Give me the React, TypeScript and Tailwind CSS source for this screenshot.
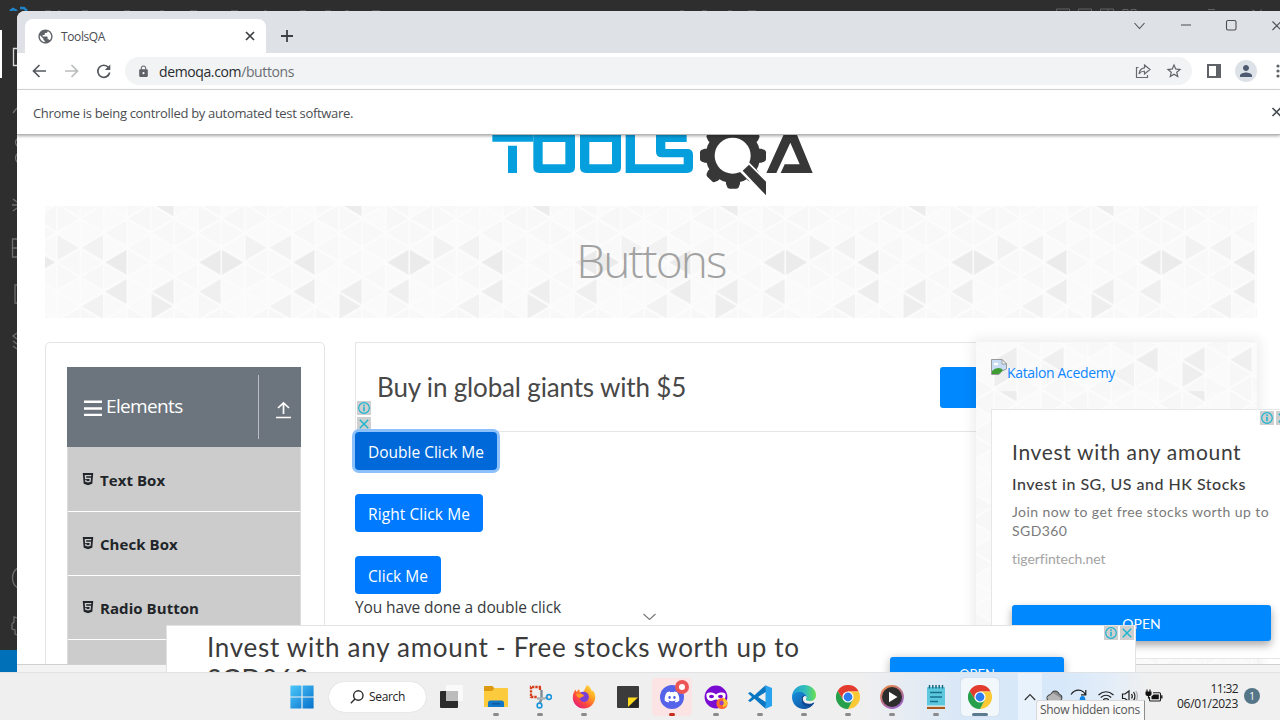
import React from "react";
import { FaDiscord, FaHtml5 } from "react-icons/fa";
import { MdPublic, MdLock, MdStarBorder, MdPerson } from "react-icons/md";

type TriSpec = { col: number; y: number; dir: "l" | "r"; fill: string };

const COL = 23.5;
const ROW = 29.3;

function noise(a: number, b: number) {
  const v = Math.sin(a * 12.9898 + b * 78.233) * 43758.5453;
  return v - Math.floor(v);
}

const darkTriangles: TriSpec[] = [
  { col: 2, y: 56.3, dir: "l", fill: "#ebebeb" },
  { col: 2, y: 85.7, dir: "l", fill: "#ededed" },
  { col: 6, y: 56.3, dir: "l", fill: "#ebebeb" },
  { col: 6, y: 85.7, dir: "l", fill: "#efefef" },
  { col: 4, y: 85.7, dir: "l", fill: "#eeeeee" },
  { col: 4, y: 100.3, dir: "r", fill: "#eeeeee" },
  { col: 1, y: 100.3, dir: "l", fill: "#f2f2f2" },
  { col: 0, y: 41.7, dir: "r", fill: "#f2f2f2" },
  { col: 1, y: 41.7, dir: "l", fill: "#f2f2f2" },
  { col: 4, y: -2.3, dir: "l", fill: "#ececec" },
];

function trianglePath(col: number, y: number, dir: "l" | "r") {
  const x0 = 11.8 + col * COL;
  const a = dir === "l" ? x0 + 1.6 : x0 + COL - 1.6;
  const b = dir === "l" ? x0 + COL - 0.8 : x0 + 0.8;
  return `M${a} ${y}L${b} ${y - 12.4}V${y + 12.4}Z`;
}

function TrianglePattern({ id, dx, dy }: { id: string; dx: number; dy: number }) {
  const cells: React.ReactNode[] = [];
  for (let c = -1; c < 8; c++) {
    for (let r = -1; r < 6; r++) {
      const odd = ((c % 2) + 2) % 2;
      const yl = (odd ? 12.3 : 27) + r * ROW;
      const yr = (odd ? 27 : 12.3) + r * ROW;
      const k = ((c % 8) + 8) % 8;
      const g1 = Math.round(247 + noise(k + 1, r + 4) * 3.4);
      const g2 = Math.round(247 + noise(k + 11, r + 9) * 3.4);
      cells.push(<path key={`l${c}_${r}`} d={trianglePath(c, yl, "l")} fill={`rgb(${g1},${g1},${g1})`} />);
      cells.push(<path key={`r${c}_${r}`} d={trianglePath(c, yr, "r")} fill={`rgb(${g2},${g2},${g2})`} />);
    }
  }
  return (
    <svg className="absolute inset-0 h-full w-full">
      <defs>
        <pattern id={id} width="188" height="117.2" patternUnits="userSpaceOnUse" patternTransform={`translate(${dx} ${dy})`}>
          <rect width="188" height="118" fill="#fcfcfc" />
          {cells}
          {darkTriangles.map((t, i) => (
            <path key={i} d={trianglePath(t.col, t.y, t.dir)} fill={t.fill} />
          ))}
          <path d={trianglePath(-1, 56.3, "r")} fill="#ebebeb" />
          <path d={trianglePath(7, 56.3, "r")} fill="#ebebeb" />
        </pattern>
      </defs>
      <rect width="100%" height="100%" fill={`url(#${id})`} />
    </svg>
  );
}

function ToolsQaLogo() {
  return (
    <svg className="block h-[62px] w-[327px]" viewBox="90 15 981 186">
      <g fill="#069fde" fillRule="evenodd">
        <path d="M97 15H220V35H97ZM144 47H171V129H144Z" />
        <path d="M220 0H345V112Q345 129 327 129H238Q220 129 220 112ZM248 36V103H316V36Z" />
        <path d="M360 0H483V112Q483 129 465 129H378Q360 129 360 112ZM388 36V103H456V36Z" />
        <path d="M497 0H525V103H671V82H606Q588 82 588 65V0H680V36H616V57H682Q699 57 699 74V112Q699 129 681 129H497Z" />
      </g>
      <g fill="#373737">
        <circle cx="819" cy="77" r="82" />
        {[0, 45, 90, 135, 180, 225, 270, 315].map((a) => (
          <path key={a} d="M798 -8L802 -18Q804 -22 809 -22H829Q834 -22 836 -18L840 -8V20H798Z" transform={`rotate(${a} 819 77)`} />
        ))}
      </g>
      <circle cx="818" cy="77" r="54" fill="#fff" />
      <path d="M838 124L866 96L940 170V215H930Z" fill="#fff" />
      <path d="M848 122L867 104L918 155V196Z" fill="#373737" />
      <path d="M919 129L975 5H1007L1058 129H962L974 103H1019L991 38L949 129Z" fill="#373737" />
    </svg>
  );
}

function ChromeIcon() {
  return (
    <svg className="h-6 w-6" viewBox="0 0 24 24">
      <path d="M12 6.5H22.7A12 12 0 0 0 1.6 6L7.2 15Z" fill="#e33b2e" />
      <path d="M16.8 14.7L11.8 24A12 12 0 0 0 22.7 6.5H12Z" fill="#fcc934" />
      <path d="M7.2 14.7L1.6 6A12 12 0 0 0 12 24L16.8 14.7Z" fill="#27a04b" />
      <circle cx="12" cy="12" r="5.6" fill="#fff" />
      <circle cx="12" cy="12" r="4.4" fill="#2d7df0" />
    </svg>
  );
}

function WindowsIcon() {
  return (
    <svg className="ml-px h-6 w-6" viewBox="0 0 24 24">
      <defs>
        <linearGradient id="win" x1="0" y1="0" x2="1" y2="1">
          <stop offset="0" stopColor="#4cc8fa" />
          <stop offset="1" stopColor="#0670cc" />
        </linearGradient>
      </defs>
      <path d="M1 .5H11.4V11.4H.4V1ZM12.6 .4H23.6V11.4H12.6ZM.4 12.6H11.4V23.6H.4ZM12.6 12.6H23.6V23.6H12.6Z" fill="url(#win)" />
    </svg>
  );
}

function TaskViewIcon() {
  return (
    <svg className="ml-[3px] h-6 w-6" viewBox="0 0 24 24">
      <rect x="7" y="0" width="17" height="16" rx="1" fill="#fafafa" />
      <rect x="1" y="6" width="18" height="17" rx="1" fill="#2c2c2c" />
      <rect x="7" y="6" width="12" height="10" fill="#bcbcbc" />
    </svg>
  );
}

function ExplorerIcon() {
  return (
    <svg className="h-6 w-6" viewBox="0 0 24 24">
      <path d="M0 2Q0 1 1 1H8.500L10.500 3.500V7H0Z" fill="#dc9a10" />
      <path d="M0 6H8L11 3H23Q24 3 24 4V21Q24 22 23 22H1Q0 22 0 21Z" fill="#fbcb3d" />
      <path d="M4 22V18Q4 15.500 6.500 15.500H17.500Q20 15.500 20 18V22Z" fill="#1476c6" />
      <path d="M8 18.800H16" stroke="#0a4f91" strokeWidth="1.200" />
    </svg>
  );
}

function SnippingIcon() {
  return (
    <svg className="h-6 w-6" viewBox="0 0 24 24" fill="none">
      <path d="M13 2H3V13M12 2.500V5" stroke="#d6401f" strokeWidth="2.300" strokeDasharray="2.400 .9" />
      <path d="M3 12H9" stroke="#d6401f" strokeWidth="2.300" strokeDasharray="2.400 .9" />
      <path d="M13.500 5V14L11.500 18.500" stroke="#7f8b94" strokeWidth="2.400" />
      <path d="M9 13.500H16L20 12" stroke="#a9b2b8" strokeWidth="2.400" />
      <circle cx="21" cy="12" r="2.400" stroke="#1e96dc" strokeWidth="1.600" />
      <circle cx="11.500" cy="20.500" r="2.400" stroke="#1e96dc" strokeWidth="1.600" />
    </svg>
  );
}

function FirefoxIcon() {
  return (
    <svg className="h-6 w-6" viewBox="0 0 24 24">
      <defs>
        <linearGradient id="fox" x1="1" y1="0" x2="0.200" y2="1">
          <stop offset="0" stopColor="#fff04a" />
          <stop offset="0.400" stopColor="#ffa222" />
          <stop offset="0.700" stopColor="#ff4a3f" />
          <stop offset="1" stopColor="#e0187f" />
        </linearGradient>
      </defs>
      <path d="M15 0C18 1.500 19 4 19.500 5.500C20 6 20.500 6 21 5.500C23 8 23.600 11 23.200 13.500C22.200 19.500 17.500 23.500 12 23.500C5.500 23.500 .8 18.500 .8 12.500C.8 9.500 1.800 6.500 3.500 4.500L4.500 7L7 4L8 7L11 7.500C12.500 6 13 3 15 0Z" fill="url(#fox)" />
      <path d="M8 8C10 6 15 6 16.500 10C17.800 14 15 17.200 12 17C9 16.800 7.500 14.500 8 13L11.500 11.500L11 9.500Z" fill="#7a3fd6" />
      <path d="M4 9C7 8.500 10.500 8.500 12 10.500C11 12 9 11.500 8 13C6.500 13 4.500 11.500 4 9Z" fill="#ff9a26" />
    </svg>
  );
}

function StickyIcon() {
  return (
    <svg className="h-6 w-6" viewBox="0 0 24 24">
      <rect x="1" y="1" width="22" height="22" rx="1" fill="#3b3b3b" />
      <path d="M12 22V12.500H22Z" fill="#ffd91c" />
      <path d="M12 22.500L22.500 12.300V22.500Z" fill="#262626" />
    </svg>
  );
}

function DiscordIcon() {
  return (
    <span className="relative flex h-6 w-6 items-center justify-center rounded-full bg-[#5562ea]">
      <FaDiscord className="h-4 w-4 text-white" />
      <span className="absolute -top-[5px] -right-[5px] h-[14px] w-[14px] rounded-full border-[4px] border-[#ed5555] bg-white" />
    </span>
  );
}

function PrivateFirefoxIcon() {
  return (
    <svg className="h-6 w-6" viewBox="0 0 24 24">
      <circle cx="12" cy="12" r="11.400" fill="#7a0bd2" />
      <path d="M2.500 9C4.500 7 9 7 12 9.500C15 7 19.500 7 21.500 9C22 13 20 16 17 16C15 16 14 14.500 12 14.500C10 14.500 9 16 7 16C4 16 2 13 2.500 9Z" fill="#fff" />
      <ellipse cx="7.500" cy="11.500" rx="2.500" ry="1.700" fill="#7a0bd2" />
      <ellipse cx="16.500" cy="11.500" rx="2.500" ry="1.700" fill="#7a0bd2" />
      <circle cx="18" cy="18.500" r="5.600" fill="#ff6a2c" />
      <path d="M19 12.500Q24 15 23.400 19Q22 22 19 22Z" fill="#ffc22b" />
      <circle cx="17.600" cy="18" r="2.200" fill="#9a40c4" />
    </svg>
  );
}

function VsCodeIcon({ className }: { className: string }) {
  return (
    <svg className={className} viewBox="0 0 24 24">
      <path d="M17.500 .2L24 3V21L17.500 23.800Z" fill="#29a3ef" />
      <path d="M17.500 .2L6.500 10.300L2.200 7L0 8.200L4 12L0 15.800L2.200 17L6.500 13.700L17.500 23.800L18 17.200L10 12L18 6.800Z" fill="#0a76c2" />
    </svg>
  );
}

function EdgeIcon() {
  return (
    <svg className="h-6 w-6" viewBox="0 0 24 24">
      <defs>
        <linearGradient id="edgeTop" x1="0" y1="0.500" x2="1" y2="0.500">
          <stop offset="0" stopColor="#1d9ddb" />
          <stop offset="0.600" stopColor="#35c1b5" />
          <stop offset="1" stopColor="#6be04c" />
        </linearGradient>
        <linearGradient id="edgeLow" x1="0" y1="0" x2="1" y2="1">
          <stop offset="0" stopColor="#178fdf" />
          <stop offset="1" stopColor="#0c4a94" />
        </linearGradient>
      </defs>
      <path d="M0 12C0 5 5.500 0 12 0C19 0 24 4.500 24 10C24 14 21 16 18 16C15 16 13.500 15 14 14C15.500 12 14.500 8.500 10.500 8C6 7.500 2 9 0 12Z" fill="url(#edgeTop)" />
      <path d="M0 12C1 8.500 4 7 7.500 7C11 7 14.500 9 14.800 12C13.500 10.200 10 10.800 9.500 14C9 18 13 20.500 17 19.800C19.500 19.300 21 18 22.200 17.500C20.500 21.500 16.500 24 12 24C5 24 0 18.500 0 12Z" fill="url(#edgeLow)" />
      <path d="M9.500 13C8.500 18 12 21.500 17.500 21.500C20 20.700 21.500 19 22.300 17.500C18 20 12 19 11 15C10.500 12.800 11.500 11.500 12.500 11C11 10.500 9.900 11.300 9.500 13Z" fill="#0d4691" />
    </svg>
  );
}

function MediaIcon() {
  return (
    <svg className="h-6 w-6" viewBox="0 0 24 24">
      <defs>
        <linearGradient id="media" x1="0" y1="0" x2="0.600" y2="1">
          <stop offset="0" stopColor="#f08a3c" />
          <stop offset="1" stopColor="#9a63c6" />
        </linearGradient>
      </defs>
      <circle cx="12" cy="12" r="11.900" fill="url(#media)" />
      <circle cx="12" cy="12" r="10" fill="#2c2c2c" />
      <path d="M9 6.800L17.500 12L9 17.200Z" fill="#fff" />
    </svg>
  );
}

function NotepadIcon() {
  return (
    <svg className="h-6 w-6" viewBox="0 0 24 24">
      <rect x="3" y="2" width="18" height="20" rx="1" fill="#5cc8de" />
      <path d="M3 21H21V24H3Z" fill="#a85a1b" />
      <path d="M3 20.500H21V21.800H3Z" fill="#f0f6f8" />
      <path d="M5.500 0V3.500M8.800 0V3.500M12 0V3.500M15.200 0V3.500M18.500 0V3.500" stroke="#135f7c" strokeWidth="1.400" />
      <path d="M6 7.500H18M6 12H18M6 16.500H14" stroke="#176f90" strokeWidth="1.500" />
    </svg>
  );
}

function AdBadge({ kind }: { kind: "info" | "close" }) {
  return (
    <span className="flex h-[14px] w-[14px] shrink-0 items-center justify-center bg-[#cfcfcf]">
      <svg className="h-[14px] w-[14px]" viewBox="0 0 14 14" fill="none" stroke="#1fb5cf">
        {kind === "info" ? (
          <>
            <circle cx="7" cy="7" r="5.300" strokeWidth="1.200" />
            <path d="M7 5.800V10.300M7 3.500V4.900" strokeWidth="1.600" />
          </>
        ) : (
          <path d="M2.800 2.800L11.200 11.200M11.200 2.800L2.800 11.200" strokeWidth="1.500" />
        )}
      </svg>
    </span>
  );
}

function TaskItem({ children, state = "run" }: { children: React.ReactNode; state?: "idle" | "run" | "alert" | "active" }) {
  return (
    <div className="relative flex h-[48px] w-[44px] shrink-0 justify-center pt-[5px]">
      <div
        className={
          state === "active"
            ? "flex h-[38px] w-[38px] items-center justify-center rounded bg-[#f2f7fc] shadow-[0_0_1px_#aab]"
            : state === "alert"
              ? "flex h-[38px] w-[40px] items-center justify-center rounded bg-[#fde4e4]"
              : "flex h-[38px] w-[38px] items-center justify-center"
        }
      >
        {children}
      </div>
      {state !== "idle" && (
        <span
          className={
            state === "active"
              ? "absolute bottom-[5px] h-[3px] w-4 rounded-full bg-[#5d7b8f]"
              : state === "alert"
                ? "absolute bottom-[5px] h-[3px] w-[6px] rounded-full bg-[#c42b1c]"
                : "absolute bottom-[5px] h-[3px] w-[6px] rounded-full bg-[#8b8b8b]"
          }
        />
      )}
    </div>
  );
}

function EditorSliver() {
  return (
    <div className="flex w-[17px] shrink-0 flex-col bg-[#2e2e2e]">
      <svg className="block w-[17px] flex-1" viewBox="0 11 17 639" fill="none" stroke="#6f6f6f" strokeWidth="1.300">
        <path d="M0 30H2V78H0Z" fill="#fff" stroke="none" />
        <path d="M18 48.500H13.500V65.500H18" stroke="#d8d8d8" />
        <path d="M13 113L17 108" />
        <path d="M17 139Q14 142 17 146M17 154Q14 158 17 162" />
        <path d="M13 199L17 202M12 205H17M13 211L17 208" />
        <path d="M18 239H12.500V257H18M12.500 248H18" />
        <path d="M18 285H15V303H18" />
        <path d="M17 333L13 336L17 339M13 341L17 344M13 346L17 349" />
        <path d="M18 568Q12.500 571 12.500 578Q12.500 585 18 588" />
        <path d="M17 618L14 617V622L12 624V629L15 630V634L17 635" />
      </svg>
      <div className="h-[22px] bg-[#0070b8]" />
    </div>
  );
}

function TabStrip() {
  return (
    <div className="flex h-[42px] w-[1263px] items-end bg-[#dee1e6] pl-2 text-[#5f6368]">
      <div className="flex h-[34px] w-[241px] items-center rounded-t-lg bg-white pr-[10px] pl-[12px]">
        <MdPublic className="h-[17px] w-[17px]" />
        <span className="ml-[7px] flex-1 pt-px text-[12px] tracking-[-0.39px] text-[#4a4d51]">ToolsQA</span>
        <svg className="h-3 w-3" viewBox="0 0 12 12" stroke="#3c4043" strokeWidth="1.700">
          <path d="M2 2L10 10M10 2L2 10" />
        </svg>
      </div>
      <svg className="mb-[10px] ml-[14px] h-[14px] w-[14px]" viewBox="0 0 14 14" stroke="#3c4043" strokeWidth="1.800">
        <path d="M7 1V13M1 7H13" />
      </svg>
      <div className="flex h-[42px] flex-1 items-start justify-end pt-[8px]">
        <svg className="h-3 w-[149px]" viewBox="0 0 149 12" fill="none" stroke="#4b4e52" strokeWidth="1.100">
          <path d="M3.500 4L8.500 9.500L13.500 4M50 6H60" />
          <rect x="95.500" y="1.500" width="9.500" height="9.500" rx="1.500" />
          <path d="M141.500 2.500L150 11M141.500 11L150 2.500" />
        </svg>
      </div>
    </div>
  );
}

function Toolbar() {
  return (
    <div className="flex h-[37px] items-center border-b border-[#dcdee1] bg-white">
      <svg className="ml-[15px] h-4 w-[80px]" viewBox="0 0 80 16" fill="none" strokeWidth="1.700">
        <path d="M14 8H1.500M7.500 2L1.500 8L7.500 14" stroke="#55595e" />
        <path d="M33 8H45.500M39.500 2L45.500 8L39.500 14" stroke="#babcbe" />
        <path d="M76.500 4.500A6 6 0 1 0 77.700 9.500" stroke="#55595e" />
        <path d="M78.300 1.500V7H72.800Z" fill="#55595e" />
      </svg>
      <div className="ml-[13px] flex h-7 w-[1067px] items-center rounded-full bg-[#f1f3f4] pr-[9px] pl-[12px]">
        <MdLock className="h-[13px] w-[13px] text-[#5f6368]" />
        <span className="ml-[9px] flex-1 text-[14px] tracking-[-0.38px] text-[#2a2c2f]">
          demoqa.com<span className="text-[#6b6f74]">/buttons</span>
        </span>
        <svg className="mr-[14px] h-4 w-4" viewBox="0 0 16 16" fill="none" stroke="#66696d" strokeWidth="1.200">
          <path d="M3.500 4.500H1.500V14.500H12.500V12" />
          <path d="M9.500 2L15 6.500L9.500 11V8.300Q6 8 4 11Q4.500 5.500 9.500 4.800Z" />
        </svg>
        <MdStarBorder className="h-[18px] w-[18px] text-[#5f6368]" />
      </div>
      <svg className="ml-[15px] h-[14px] w-[14px]" viewBox="0 0 14 14">
        <path d="M0 0H14V14H0ZM2 2V12H9V2Z" fill="#5f6368" fillRule="evenodd" />
      </svg>
      <span className="ml-[14px] flex h-[22px] w-[22px] shrink-0 items-center justify-center rounded-full bg-[#dde1e8]">
        <MdPerson className="h-[18px] w-[18px] text-[#4e5a72]" />
      </span>
      <svg className="ml-[19px] h-[16px] w-1 shrink-0" viewBox="0 0 4 16" fill="#5f6368">
        <circle cx="2" cy="3" r="1.600" />
        <circle cx="2" cy="8" r="1.600" />
        <circle cx="2" cy="13" r="1.600" />
      </svg>
    </div>
  );
}

const menuItems = ["Text Box", "Check Box", "Radio Button", ""];

function Sidebar() {
  return (
    <aside className="h-[340px] w-[280px] shrink-0 rounded-[5px] border border-[#e4e4e4] bg-white px-[21px] pt-[24px]">
      <div className="flex h-[80px] w-[234px] items-center bg-[#6c757d] text-white">
        <svg className="mt-px ml-[17px] h-[16px] w-[18px]" viewBox="0 0 18 16" stroke="#fff" strokeWidth="2.400">
          <path d="M0 1.700H18M0 8.500H18M0 15H18" />
        </svg>
        <span className="mb-px ml-[4px] flex-1 text-[19px] tracking-[-0.65px]">Elements</span>
        <span className="h-[64px] w-px bg-[#b9bec2]" />
        <svg className="mt-[5px] mr-[9px] ml-[16px] h-[18px] w-[17px]" viewBox="0 0 17 18" fill="none" stroke="#fff" strokeWidth="1.700">
          <path d="M8.500 13V2M3 7L8.500 1.800L14 7M1 16.500H16" />
        </svg>
      </div>
      <div className="w-[234px] border-x border-[#dcdcdc] bg-[#ccc] pt-px">
        {menuItems.map((label, i) => (
          <div key={i} className="flex h-[64px] items-center border-b border-white pt-px pl-[14px] text-[#212529]">
            {label && (
              <>
                <FaHtml5 className="mb-[3px] -ml-px h-[14px] w-[14px]" />
                <span className="ml-[5px] text-[15px] font-bold tracking-[0.06px]">{label}</span>
              </>
            )}
          </div>
        ))}
      </div>
    </aside>
  );
}

function MainColumn() {
  return (
    <main className="ml-[30px] flex w-[621px] shrink-0 flex-col items-start">
      <div className="relative flex h-[90px] w-full items-center border-y border-l border-[#e6e6e6] pl-[21px]">
        <span className="flex-1 font-[Lato] text-[26px] tracking-[-0.16px] text-[#484848]">Buy in global giants with $5</span>
        <span className="h-[41px] w-[36px] rounded-l-[3px] bg-[#0088ff]" />
        <div className="absolute top-[58px] left-px flex flex-col gap-[2px]">
          <AdBadge kind="info" />
          <AdBadge kind="close" />
        </div>
      </div>
      <div className="flex flex-col items-start gap-6 text-[15.5px] text-white">
        <button className="relative h-[38px] w-[142px] rounded bg-[#0069d9] pt-[3px] tracking-[0px] ring-[3px] ring-[#8cc1fb]">Double Click Me</button>
        <button className="h-[38px] w-[128px] rounded bg-[#007bff] pt-[3px] tracking-[0.08px]">Right Click Me</button>
        <button className="h-[38px] w-[86px] rounded bg-[#007bff] pt-[3px] tracking-[0px]">Click Me</button>
      </div>
      <p className="mt-[1px] text-[15.5px] leading-6 tracking-[-0.11px] text-[#373b3e]">You have done a double click</p>
    </main>
  );
}

function BrokenImage() {
  return (
    <svg className="h-4 w-4" viewBox="0 0 16 16">
      <path d="M.5 .5H11L15.500 5V10L11 12L8 15.500H.5Z" fill="#c9dcf5" stroke="#9a9a9a" />
      <path d="M11 .5V5H15.500Z" fill="#fff" stroke="#9a9a9a" />
      <ellipse cx="5" cy="5" rx="2.500" ry="1.300" fill="#fff" />
      <path d="M1 15V12Q5 8 10 9.500L12 11L8 15Z" fill="#3f9c35" />
    </svg>
  );
}

function RightColumn() {
  return (
    <aside className="relative h-[330px] w-[281px] shrink-0 pt-[17px] pl-[15px] shadow-[0_0_12px_3px_rgba(0,0,0,0.08)]">
      <TrianglePattern id="triRight" dx={-88} dy={-68} />
      <div className="relative flex h-[50px] items-start text-[14px] tracking-[-0.34px] text-[#0d86ff]">
        <BrokenImage />
        <span className="mt-[3px]">Katalon Acedemy</span>
      </div>
      <div className="relative flex h-[250px] w-[300px] flex-col border border-[#e7e7e7] bg-white pl-[20px] font-[Lato] text-[#3c3c3c]">
        <div className="absolute top-px right-0 flex gap-[2px]">
          <AdBadge kind="info" />
          <AdBadge kind="close" />
        </div>
        <h3 className="mt-[29px] text-[21px] leading-[26px] tracking-[0.67px] whitespace-nowrap">Invest with any amount</h3>
        <p className="mt-[9px] text-[16px] leading-[20px] font-medium tracking-[0.5px] whitespace-nowrap">Invest in SG, US and HK Stocks</p>
        <p className="mt-[8px] text-[14px] leading-[19px] tracking-[0.42px] whitespace-nowrap text-[#7a7a7a]">
          Join now to get free stocks worth up to
          <br />
          SGD360
        </p>
        <p className="mt-[9px] text-[14px] leading-[19px] tracking-[-0.05px] text-[#a3a3a3]">tigerfintech.net</p>
        <div className="mt-[37px] flex h-[36px] w-[259px] items-center justify-center rounded-[3px] bg-[#0088ff] text-[14px] text-white shadow-[0_4px_8px_rgba(0,0,0,0.35)]">OPEN</div>
      </div>
    </aside>
  );
}

function BottomAd() {
  return (
    <div className="absolute top-[614px] left-[149px] h-[47px] w-[970px] overflow-hidden border border-b-0 border-[#e3e3e3] bg-white font-[Lato]">
      <div className="flex">
        <p className="mt-[5px] ml-[40px] w-[683px] text-[26px] leading-[32px] tracking-[0.72px] whitespace-nowrap text-[#3b3b3b]">
          Invest with any amount - Free stocks worth up to
          <br />
          SGD360
        </p>
        <div className="mt-[31px] h-[34px] w-[174px] rounded-[3px] bg-[#0088ff] pt-[8px] text-center text-[13px] leading-[18px] text-white shadow-[0_2px_10px_rgba(0,0,0,0.3)]">OPEN</div>
      </div>
      <div className="absolute top-0 right-px flex gap-[2px]">
        <AdBadge kind="info" />
        <AdBadge kind="close" />
      </div>
    </div>
  );
}

function BrowserWindow() {
  return (
    <div className="relative flex h-[661px] w-[1263px] shrink-0 flex-col overflow-hidden rounded-tl-lg bg-white">
      <TabStrip />
      <Toolbar />
      <div className="relative flex h-[45px] shrink-0 items-center justify-between border-b border-[#b5b5b5] bg-white pl-[16px] text-[13px] tracking-[-0.32px] text-[#4b4e52] shadow-[0_1px_3px_rgba(0,0,0,0.35)]">
        <span className="pt-[3px]">Chrome is being controlled by automated test software.</span>
        <svg className="h-3 w-[9px]" viewBox="0 0 9 12" stroke="#4b4e52" strokeWidth="1.700">
          <path d="M1.500 2L9.500 10M9.500 2L1.500 10" />
        </svg>
      </div>
      <div className="flex h-[529px] shrink-0 flex-col overflow-hidden pl-[28px]">
        <div className="h-[71px] shrink-0 pl-[445px]">
          <ToolsQaLogo />
        </div>
        <div className="relative flex h-[112px] w-[1212px] shrink-0 items-center justify-center">
          <TrianglePattern id="triBanner" dx={0} dy={0} />
          <h1 className="relative -mt-[4px] text-[46px] leading-none font-light tracking-[-1.85px] text-[#a2a2a2]">Buttons</h1>
        </div>
        <div className="mt-6 flex items-start">
          <Sidebar />
          <MainColumn />
          <RightColumn />
        </div>
      </div>
      <div className="flex-1 border-t border-[#cfcfcf] bg-[#f3f3f3]" />
      <svg className="absolute top-[602px] left-[625px] h-[8px] w-[15px]" viewBox="0 0 15 8" fill="none" stroke="#777" strokeWidth="1.100">
        <path d="M1.500 1L7.500 6.500L13.500 1" />
      </svg>
      <BottomAd />
    </div>
  );
}

function Taskbar() {
  return (
    <div className="relative flex h-[48px] w-[1280px] shrink-0 items-center border-t border-[#e0e3e6] bg-[linear-gradient(90deg,#f0efef_0,#f0efef_860px,#d9e8f7_960px,#d6e8fa_1060px,#e3edf8_1110px,#f0f0f0_1150px)] pl-[279px]">
      <TaskItem state="idle"><WindowsIcon /></TaskItem>
      <div className="ml-[6px] flex h-[30px] w-[97px] shrink-0 items-center rounded-full bg-white pl-[21px] shadow-[0_0_1px_#bbb]">
        <svg className="h-[14px] w-[14px]" viewBox="0 0 14 14" fill="none" stroke="#2b2b2b" strokeWidth="1.400">
          <circle cx="8.300" cy="5.500" r="4.700" />
          <path d="M5 9L.8 13.200" />
        </svg>
        <span className="ml-[5px] pt-px text-[12px] tracking-[-0.33px] text-[#222]">Search</span>
      </div>
      <div className="ml-px"><TaskItem state="idle"><TaskViewIcon /></TaskItem></div>
      <div className="ml-[3px] flex">
        <TaskItem><ExplorerIcon /></TaskItem>
        <TaskItem><SnippingIcon /></TaskItem>
        <TaskItem><FirefoxIcon /></TaskItem>
        <TaskItem state="idle"><StickyIcon /></TaskItem>
        <TaskItem state="alert"><DiscordIcon /></TaskItem>
        <TaskItem><PrivateFirefoxIcon /></TaskItem>
        <TaskItem><VsCodeIcon className="h-6 w-6" /></TaskItem>
        <TaskItem><EdgeIcon /></TaskItem>
        <TaskItem><ChromeIcon /></TaskItem>
        <TaskItem><MediaIcon /></TaskItem>
        <TaskItem><NotepadIcon /></TaskItem>
        <TaskItem state="active"><ChromeIcon /></TaskItem>
      </div>
      <div className="ml-[16px] flex h-full w-[24px] items-center justify-center bg-[#e8f2fc]">
        <svg className="h-2 w-3" viewBox="0 0 12 8" fill="none" stroke="#333" strokeWidth="1.200">
          <path d="M.8 7L6 1.500L11.200 7" />
        </svg>
      </div>
      <svg className="mb-px ml-[4px] h-[16px] w-[118px]" viewBox="0 0 118 16" fill="none" stroke="#1f1f1f" strokeWidth="1.200">
        <path d="M3.500 13Q0 12 1 9Q2 6.500 4.500 6.500Q6.500 2 10 3Q12.500 3.500 13 6Q16.500 7 16 10Q15.500 13 13 13Z" fill="#8d8d8d" strokeWidth="0.800" />
        <path d="M1.200 9.500L7 5L15.500 10.500L13 13H3Z" fill="#b5b5b5" stroke="none" />
        <path d="M25 6.500Q29 .8 35 2.500Q38 3.700 39.500 6.500M39.800 2V6.800H35M25 12.500H29" />
        <path d="M32.500 15Q33 10 36.500 10Q40 10 40.500 15Z" fill="#0a84e8" stroke="none" />
        <circle cx="36.500" cy="10.500" r="2.600" fill="#0a84e8" stroke="none" />
        <path d="M52.500 7Q60 .5 67.500 7M54.800 9.500Q60 5 65.200 9.500M57.200 11.800Q60 9.500 62.800 11.800" />
        <circle cx="60" cy="13.500" r="1.200" fill="#1f1f1f" stroke="none" />
        <path d="M76.500 6V10.500H79L83 13.500V3L79 6ZM85.500 6Q87.200 8.300 85.500 10.500M87.500 4Q90.500 8.300 87.500 12.500" />
        <path d="M89.800 3Q93 8.300 89.800 13.500" stroke="#aaa" />
        <path d="M107 4.800H113.500Q114.500 4.800 114.500 5.800V12Q114.500 13 113.500 13H104.500Q103.500 13 103.500 12V9" strokeWidth="1.100" />
        <path d="M105.500 8.500L107.500 6.500H112.800V11.300H105.500Z" fill="#111" stroke="none" />
        <path d="M115.800 7.300V10.500" strokeWidth="1.400" />
        <path d="M99.500 3.500H105.500V6Q105.500 8 102.500 8Q99.500 8 99.500 6Z" fill="#111" stroke="none" />
        <path d="M101 1.500V4M104 1.500V4M102.500 8V10.500" />
      </svg>
      <div className="mb-px flex w-[74px] flex-col items-end text-[12px] leading-[15px] tracking-[-0.27px] text-[#252525]">
        <span className="tracking-[-0.6px]">11:32</span>
        <span>06/01/2023</span>
      </div>
      <span className="mb-px ml-[6px] flex h-4 w-4 items-center justify-center rounded-full bg-[#557588] text-[10px] text-white">1</span>
      <div className="absolute top-[27px] left-[1036px] h-[20px] w-[109px] rounded-tl-[3px] border border-b-0 border-[#d8d8d8] border-r-[#8c8c8c] bg-[#f9f9f9] pl-[3px] text-[12px] leading-[18px] tracking-[-0.29px] whitespace-nowrap text-[#575757]">
        Show hidden icons
      </div>
    </div>
  );
}

export default function App() {
  return (
    <div className="flex h-[720px] w-[1280px] flex-col overflow-hidden bg-[#2e2e2e] font-['Open_Sans','Noto_Sans',sans-serif]">
      <div className="flex h-[11px] shrink-0 items-end overflow-hidden">
        <svg className="block h-[11px] w-[1280px]" viewBox="0 0 1280 11" fill="none" stroke="#626262">
          <path d="M10 11L13 9L17 11M20 8L24 8L27 11" stroke="#1f84c8" strokeWidth="2.500" />
          <path d="M45 10.500H51M58 10.500H60M82 10.500H88M124 10.500H130M160 10.500H164M190 10.500H197M231 10.500H238M264 10.500H267M300 10.500H306M325 10.500H331M345 10.500H349M372 10.500H380M680 10.500H684M702 10.500H707M728 10.500H732M748 10.500H756" strokeWidth="0.700" />
          <path d="M1056.500 11V9H1069.500V11M1078.500 11V9H1091.500V11M1100.500 11V9H1113.500V11M1108 9V11M1123 11V9.500H1128V11M1131 11V9.500H1136V11M1208 9.500H1215M1252 10L1255 11M1262 9.500L1260 11" />
        </svg>
      </div>
      <div className="flex h-[661px] shrink-0">
        <EditorSliver />
        <BrowserWindow />
      </div>
      <Taskbar />
    </div>
  );
}
